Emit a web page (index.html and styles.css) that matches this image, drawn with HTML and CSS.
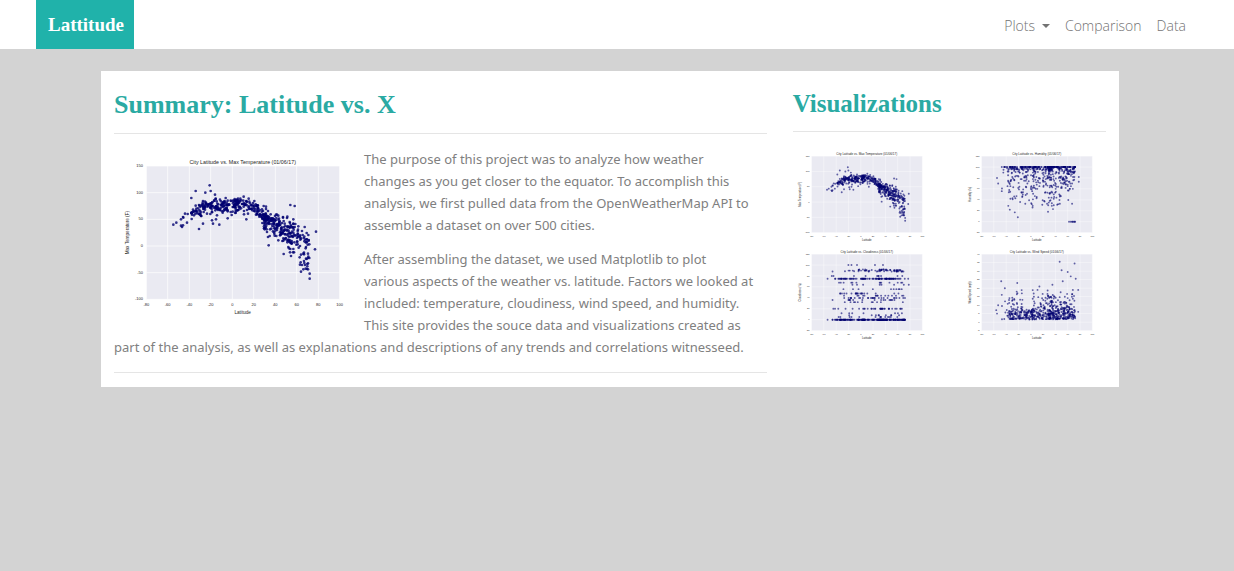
FILE: index.html
```html
<!DOCTYPE html>
<html lang="en">
<head>
  <meta charset="utf-8">
  <meta name="viewport" content="width=device-width, initial-scale=1">
  <title>Lattitude</title>
  <link rel="stylesheet" href="styles.css">
</head>
<body>
  <header class="navbar">
    <a class="brand" href="#">Lattitude</a>
    <nav class="links">
      <button class="nav-item" type="button" aria-haspopup="true">Plots<span class="caret"></span></button>
      <a class="nav-item" href="#comparison">Comparison</a>
      <a class="nav-item" href="#data">Data</a>
    </nav>
  </header>
  <main class="card">
    <article class="column">
      <h1 class="title">Summary: Latitude vs. X</h1>
      <hr class="rule">
      <div class="story">
        <svg class="plot plot-large" data-plot="temperature" viewBox="12 0 738 510" role="img" aria-label="City latitude vs. max temperature"></svg>
        <p class="text">The purpose of this project was to analyze how weather<br>
          changes as you get closer to the equator. To accomplish this<br>
          analysis, we first pulled data from the OpenWeatherMap API to<br>
          assemble a dataset on over 500 cities.</p>
        <p class="text">After assembling the dataset, we used Matplotlib to plot<br>
          various aspects of the weather vs. latitude. Factors we looked at<br>
          included: temperature, cloudiness, wind speed, and humidity.<br>
          This site provides the souce data and visualizations created as<br>
          part of the analysis, as well as explanations and descriptions of any trends and correlations witnesseed.</p>
      </div>
      <hr class="rule rule-end">
    </article>
    <aside class="column">
      <h2 class="subtitle">Visualizations</h2>
      <hr class="rule">
      <div class="gallery">
        <a href="#temperature"><svg class="plot" data-plot="temperature" viewBox="12 0 738 510" role="img" aria-label="Max temperature"></svg></a>
        <a href="#humidity"><svg class="plot" data-plot="humidity" viewBox="12 0 738 510" role="img" aria-label="Humidity"></svg></a>
        <a href="#cloudiness"><svg class="plot" data-plot="cloudiness" viewBox="12 0 738 510" role="img" aria-label="Cloudiness"></svg></a>
        <a href="#wind"><svg class="plot" data-plot="wind" viewBox="12 0 738 510" role="img" aria-label="Wind speed"></svg></a>
      </div>
    </aside>
  </main>
  <script src="plots.js"></script>
</body>
</html>
```
FILE: styles.css
```css
* { box-sizing: border-box; }

body {
  margin: 0;
  background: #d3d3d3;
  color: #808080;
  font-family: Lato, "Open Sans", sans-serif;
  font-size: 14px;
  line-height: 22px;
}

.navbar {
  display: flex;
  justify-content: space-between;
  align-items: stretch;
  min-height: 49px;
  padding: 0 48px 0 36px;
  background: #fff;
}

.brand {
  display: flex;
  align-items: center;
  padding: 0 10px 0 12px;
  background: #20b2aa;
  color: #fff;
  font-family: "Liberation Serif", serif;
  font-size: 19px;
  font-weight: 700;
  text-decoration: none;
}

.links {
  display: flex;
  align-items: center;
  gap: 15px;
  font-family: "Open Sans", sans-serif;
  font-size: 14px;
}

.nav-item {
  display: flex;
  align-items: center;
  gap: 7px;
  padding: 2px 0 0;
  border: 0;
  background: none;
  color: #737373;
  font: inherit;
  font-weight: 300;
  text-decoration: none;
}

.caret {
  border: 4px solid transparent;
  border-top-color: currentColor;
  border-bottom: 0;
}

.card {
  display: grid;
  grid-template-columns: 2fr 1fr;
  margin: 22px 115px 22px 101px;
  background: #fff;
}

.column {
  min-width: 0;
  padding: 20px 13px 14px;
}

.title,
.subtitle {
  margin: 0;
  color: #2aaaa3;
  font-family: "Liberation Serif", serif;
  font-weight: 700;
}

.title {
  font-size: 26px;
  line-height: 28px;
}

.subtitle {
  font-size: 25px;
  line-height: 26px;
}

.rule {
  margin: 14px 0;
  border: 0;
  border-top: 1px solid #e5e5e5;
}

.rule-end { margin-bottom: 0; }

.plot {
  display: block;
  width: 100%;
  height: auto;
}

.plot-large {
  float: left;
  width: 246px;
  margin: 2px 4px 0 0;
}

.text {
  margin: 0 0 12px;
  font-family: "Noto Sans", "Open Sans", sans-serif;
  font-size: 13px;
}

.gallery {
  display: grid;
  grid-template-columns: 141px 141px;
  justify-content: space-between;
  gap: 1px;
  padding: 1px 2px 0 0;
}

.plot .back { fill: #eaeaf2; }
.plot .grid { stroke: #fff; stroke-width: 2; }
.plot .dots { fill: #000070; fill-opacity: 0.8; }
.gallery .dots { fill-opacity: 0.6; }

.plot text {
  fill: #262626;
  font-family: "Liberation Sans", sans-serif;
  font-size: 12px;
}

.plot .label { font-size: 14px; }
.plot .heading { font-size: 16px; }
```
FILE: plots.js
```js
const box = { left: 109, top: 48, width: 580, height: 400 };

function generator(seed) {
  return () => {
    seed = (seed + 0x6d2b79f5) | 0;
    let t = Math.imul(seed ^ (seed >>> 15), 1 | seed);
    t = (t + Math.imul(t ^ (t >>> 7), 61 | t)) ^ t;
    return ((t ^ (t >>> 14)) >>> 0) / 4294967296;
  };
}

const plots = {
  temperature: { name: 'Max Temperature', axis: 'Max Temperature (F)', min: -100, max: 150, step: 50 },
  humidity: { name: 'Humidity', axis: 'Humidity (%)', min: -20, max: 120, step: 20 },
  cloudiness: { name: 'Cloudiness', axis: 'Cloudiness (%)', min: -20, max: 120, step: 20 },
  wind: { name: 'Wind Speed', axis: 'Wind Speed (mph)', min: -5, max: 40, step: 5 }
};

const curve = [[-56, 42], [-45, 55], [-35, 67], [-22, 75], [0, 78], [15, 78], [24, 69], [33, 49], [43, 35], [53, 19], [60, 14], [66, 8], [73, -2]];

function average(lat) {
  const i = Math.max(1, curve.findIndex(p => p[0] >= lat));
  const [a, b] = [curve[i - 1], curve[i]];
  return a[1] + (b[1] - a[1]) * (lat - a[0]) / (b[0] - a[0]);
}

const extras = {
  temperature: [[-21, 114], [-34, 103], [-20, 103], [-25, 100], [-38, 90], [-16, 96], [-31, 32], [-12, 40], [54, 77], [58, 75], [78, 27], [77, -6], [72, -61], [72, -52], [-55, 40], [-52, 44], [-46, 39], [-42, 44], [-19, 48], [-18, 42], [34, 1], [48, -15], [57, 50]],
  humidity: [[-55, 80], [-53, 70], [-47, 100], [-47, 56], [-33, 42], [-26, 17], [-21, 8], [-34, 22], [3, 26], [28, 18], [36, 23], [61, 40], [67, 33], [78, 82], [78, 73], [62, 0], [65, 0], [67, 0], [68, 0], [70, 0], [71, 0], [72, 0]],
  cloudiness: [[-54, 75], [-46, 88], [-54, 0], [-46, 0], [-20, 100], [-15, 100], [-6, 100], [23, 100], [36, 100], [78, 64], [77, 75], [60, 68], [-46, 36]],
  wind: [[-56, 7], [-53, 10], [-48, 24], [-47, 16], [-42, 20], [-22, 23], [-23, 18], [47, 35.5], [50, 30.5], [71, 34.5], [60, 29.5], [65, 27], [52, 24], [35, 22], [73, 25.5], [77, 19], [77, 6], [14, 21], [11, 19], [-55, 5]]
};

function samples(kind) {
  const rand = generator(47);
  const normal = () => rand() + rand() + rand() + rand() - 2;
  const pick = list => list[Math.floor(rand() * list.length)];
  const points = extras[kind].slice();
  for (let i = 0; i < 560; i++) {
    const part = rand();
    let lat = part < 0.32 ? -38 + rand() * 44 : part < 0.56 ? 2 + rand() * 32 : 29 + rand() * 43;
    if (part < 0.02) lat = -48 + rand() * 12;
    let value;
    if (kind === 'temperature') {
      value = average(lat) + normal() * (lat > 50 ? 30 : lat > 28 ? 22 : 11);
      if (lat > 62 && rand() < 0.3) value = -16 - rand() * 34;
      if (lat < 24 && rand() < 0.12) value -= 14;
    } else if (kind === 'humidity') {
      const spread = rand();
      const depth = rand();
      value = spread < 0.28 ? 100 : 98 - depth * depth * 70;
      if (lat > 50 && value < 55) value = 70 + rand() * 28;
      value = Math.round(value);
    } else if (kind === 'cloudiness') {
      const share = rand();
      value = share < 0.34 ? 0
        : share < 0.5 ? 75
        : share < 0.67 ? 88 + Math.round(rand() * 4)
        : pick([5, 8, 12, 20, 20, 20, 32, 36, 40, 40, 44, 48, 56, 64, 68, 80]);
      if (value > 85 && lat < 30 && rand() < 0.6) value = pick([0, 40, 48, 75]);
    } else {
      value = 1.6 - Math.log(1 - rand() * 0.95) * 6;
      if (lat > -12 && lat < 3) value = 1.5 + rand() * 6;
      value = Math.min(value, 14 + rand() * 7);
    }
    points.push([lat, value]);
  }
  return points;
}

function draw(svg) {
  const kind = svg.dataset.plot;
  const radius = svg.closest('.gallery') ? 5 : 4;
  const { name, axis, min, max, step } = plots[kind];
  const x = v => Math.round(box.left + (v + 80) * box.width / 180);
  const y = v => Math.round(box.top + (max - v) * box.height / (max - min));
  const bottom = box.top + box.height;
  const right = box.left + box.width;
  let grid = '';
  let ticks = '';
  for (let v = -80; v <= 100; v += 20) {
    grid += `M${x(v)} ${box.top}V${bottom}`;
    ticks += `<text x="${x(v)}" y="469" text-anchor="middle">${v}</text>`;
  }
  for (let v = min; v <= max; v += step) {
    grid += `M${box.left} ${y(v)}H${right}`;
    ticks += `<text x="99" y="${y(v) + 3}" text-anchor="end">${v}</text>`;
  }
  const dots = samples(kind).map(p => `<circle cx="${x(p[0])}" cy="${y(p[1])}" r="${radius}"/>`).join('');
  svg.innerHTML = `<rect class="back" x="${box.left}" y="${box.top}" width="${box.width}" height="${box.height}"/>
    <path class="grid" d="${grid}"/>
    <g class="dots">${dots}</g>${ticks}
    <text class="heading" x="398" y="41" text-anchor="middle">City Latitude vs. ${name} (01/06/17)</text>
    <text class="label" x="398" y="492" text-anchor="middle">Latitude</text>
    <text class="label" transform="translate(56 248) rotate(-90)" text-anchor="middle">${axis}</text>`;
}

document.querySelectorAll('[data-plot]').forEach(draw);
```
